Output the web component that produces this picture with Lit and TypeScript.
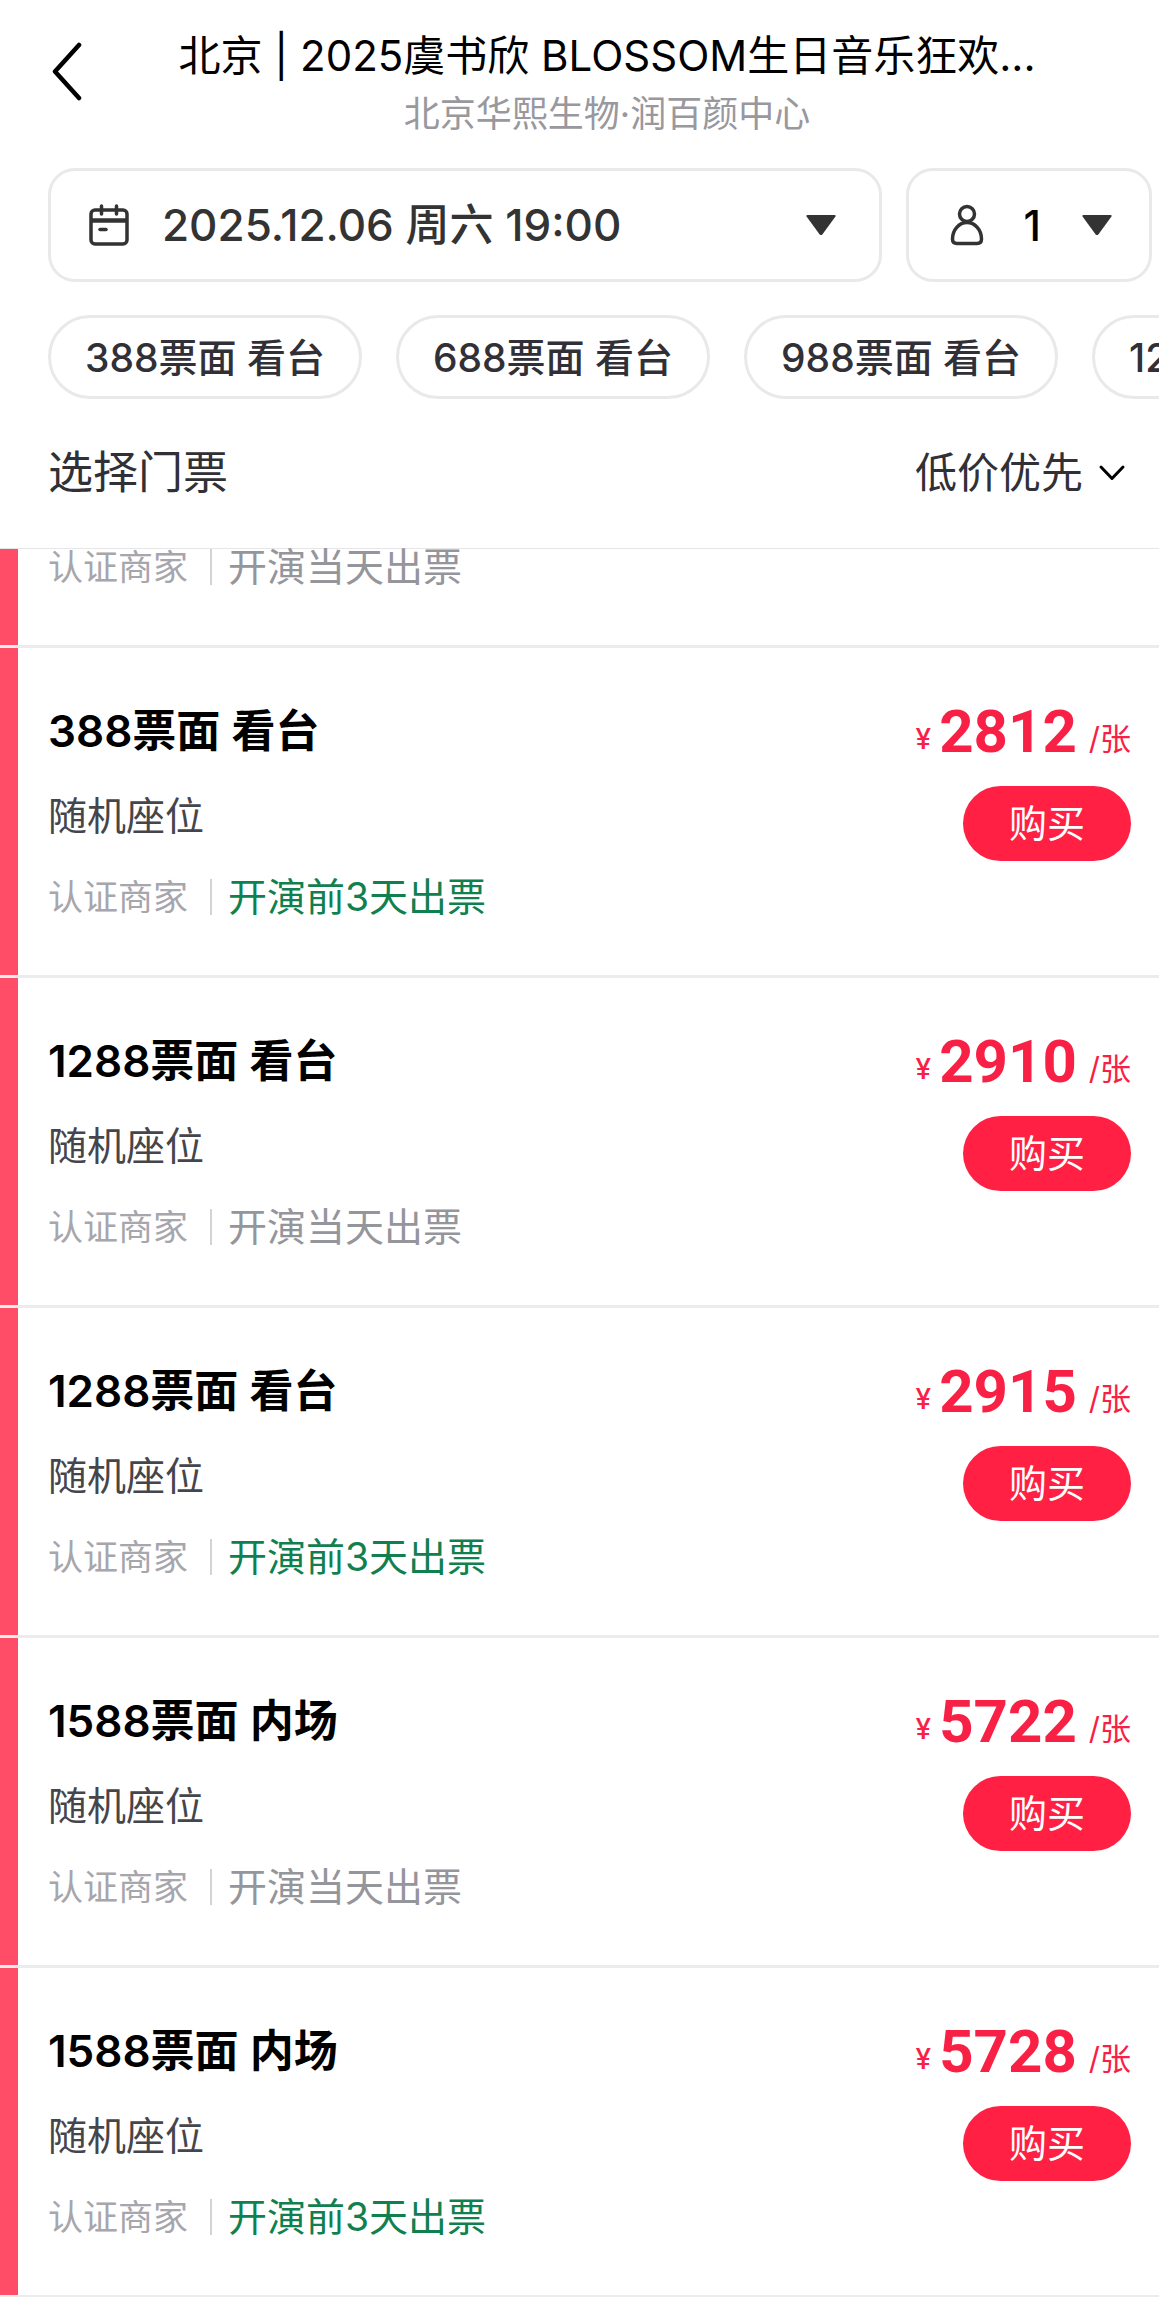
import { LitElement, html, css, svg } from "lit";
import { customElement, property } from "lit/decorators.js";
import { classMap } from "lit/directives/class-map.js";

interface Ticket {
  name: string;
  seat: string;
  seller: string;
  delivery: string;
  early: boolean;
  price: number;
}

const EARLY = "开演前3天出票";
const SAME_DAY = "开演当天出票";

const ticket = (name: string, price: number, early: boolean): Ticket => ({
  name,
  price,
  early,
  seat: "随机座位",
  seller: "认证商家",
  delivery: early ? EARLY : SAME_DAY,
});

const TICKETS: Ticket[] = [
  ticket("388票面 看台", 2812, true),
  ticket("1288票面 看台", 2910, false),
  ticket("1288票面 看台", 2915, true),
  ticket("1588票面 内场", 5722, false),
  ticket("1588票面 内场", 5728, true),
];

const CHIPS = ["388票面 看台", "688票面 看台", "988票面 看台", "1288票面 看台"];

const triangle = html`<svg class="tri" viewBox="0 0 32 22" aria-hidden="true">
  ${svg`<path d="M2.5 1h27q2 0 .8 1.800L17.500 20.200q-1.500 1.800-3 0L1.700 2.800Q.5 1 2.500 1z" fill="#333"/>`}
</svg>`;

const base = css`
  *,
  *::before {
    box-sizing: border-box;
  }
  button,
  select {
    appearance: none;
    margin: 0;
    padding: 0;
    border: 0;
    background: none;
    color: inherit;
    font: inherit;
    cursor: pointer;
  }
  svg {
    display: block;
    flex: none;
  }
`;

@customElement("ticket-meta")
export class TicketMeta extends LitElement {
  @property() seller = "";
  @property() delivery = "";
  @property({ type: Boolean }) early = false;

  static styles = [
    base,
    css`
      :host {
        display: flex;
        align-items: center;
        height: 36px;
        line-height: 36px;
        white-space: nowrap;
      }
      .seller {
        font-size: 35px;
        color: #a6a6ac;
      }
      .rule {
        width: 2px;
        height: 36px;
        margin: 0 16px 0 22px;
        background: #d3d4d8;
      }
      .delivery {
        font-size: 39px;
        color: #95959c;
      }
      .early {
        color: #11804f;
      }
    `,
  ];

  render() {
    return html`<span class="seller">${this.seller}</span>
      <span class="rule"></span>
      <span class=${classMap({ delivery: true, early: this.early })}>${this.delivery}</span>`;
  }
}

@customElement("ticket-row")
export class TicketRow extends LitElement {
  @property({ attribute: false }) ticket!: Ticket;

  static styles = [
    base,
    css`
      :host {
        display: flex;
        justify-content: space-between;
        padding: 53px 28px 60px 30px;
      }
      .name {
        margin: 0 0 31px;
        font-size: 44px;
        line-height: 60px;
        font-weight: 600;
        color: #000;
      }
      .seat {
        margin: 0 0 39px;
        font-size: 39px;
        line-height: 48px;
        color: #45454c;
      }
      .offer {
        display: flex;
        flex-direction: column;
        align-items: flex-end;
        gap: 21px;
      }
      .price {
        display: flex;
        align-items: flex-end;
        height: 64px;
        margin: 0;
        line-height: 52px;
        color: #f82145;
      }
      .yen {
        margin-right: 8px;
        font-size: 28px;
        font-weight: 500;
      }
      .amount {
        font-family: Roboto, "Liberation Sans", sans-serif;
        font-size: 60px;
        line-height: 66px;
        font-weight: 700;
      }
      .unit {
        margin-left: 12px;
        font-size: 31px;
      }
      .buy {
        width: 168px;
        height: 75px;
        border-radius: 38px;
        background: #ff2043;
        color: #fff;
        font-size: 38px;
        line-height: 75px;
      }
    `,
  ];

  render() {
    const t = this.ticket;
    return html`<div class="info">
        <h2 class="name">${t.name}</h2>
        <p class="seat">${t.seat}</p>
        <ticket-meta .seller=${t.seller} .delivery=${t.delivery} .early=${t.early}></ticket-meta>
      </div>
      <div class="offer">
        <p class="price">
          <span class="yen">¥</span><span class="amount">${t.price}</span><span class="unit">/张</span>
        </p>
        <button class="buy" type="button">购买</button>
      </div>`;
  }
}

@customElement("app-root")
export class AppRoot extends LitElement {
  static styles = [
    base,
    css`
      :host {
        display: block;
        min-height: 100vh;
        overflow: hidden;
        background: #fff;
        font-family: Inter, "Noto Sans CJK SC", sans-serif;
        color: #303036;
      }
      .top {
        border-bottom: 1px solid #e6e6e6;
      }
      .bar {
        display: grid;
        grid-template-columns: 127px 1fr 120px;
        padding: 29px 0 33px 48px;
      }
      .back {
        justify-self: start;
        align-self: start;
        padding: 12px 4px;
      }
      .back svg {
        width: 30px;
        height: 60px;
      }
      .heading {
        display: flex;
        flex-direction: column;
        gap: 10px;
        text-align: center;
        white-space: nowrap;
      }
      .title {
        margin: 0;
        font-size: 42px;
        line-height: 54px;
        font-weight: 400;
        color: #000;
      }
      .venue {
        margin: 0;
        font-size: 36px;
        line-height: 42px;
        color: #98989e;
      }
      .filters {
        display: flex;
        gap: 24px;
        padding: 0 7px 33px 48px;
      }
      .field {
        display: flex;
        align-items: center;
        height: 114px;
        border: 3px solid #e9e9e9;
        border-radius: 27px;
        font-size: 44px;
        font-weight: 500;
        color: #333;
      }
      .date {
        flex: 1;
        padding: 0 42px 0 38px;
      }
      .date select {
        flex: 1;
        margin-left: 33px;
        text-align: left;
      }
      .count {
        justify-content: space-between;
        width: 246px;
        padding: 0 36px 0 41px;
        font-size: 42px;
        color: #000;
      }
      .calendar {
        width: 40px;
        height: 42px;
      }
      .person {
        width: 34px;
        height: 42px;
      }
      .tri {
        width: 32px;
        height: 22px;
      }
      .chips {
        display: flex;
        gap: 34px;
        padding: 0 48px 0 48px;
        overflow-x: auto;
        scrollbar-width: none;
      }
      .chip {
        flex: none;
        height: 84px;
        padding: 0 34px 4px;
        border: 3px solid #e9e9e9;
        border-radius: 42px;
        font-size: 39px;
        font-weight: 500;
        white-space: nowrap;
      }
      .sortbar {
        display: flex;
        justify-content: space-between;
        align-items: center;
        padding: 44px 33px 45px 48px;
        line-height: 60px;
      }
      .label {
        margin: 0;
        font-size: 45px;
        line-height: 60px;
        font-weight: 400;
      }
      .sort {
        display: flex;
        align-items: center;
        gap: 14px;
        font-size: 42px;
      }
      .sort svg {
        width: 28px;
        height: 18px;
      }
      .list {
        margin: 0;
        padding: 0;
        list-style: none;
      }
      .item {
        display: flex;
        border-bottom: 3px solid #ececec;
      }
      .item::before {
        content: "";
        flex: none;
        width: 18px;
        background: #ff4d67;
      }
      .item ticket-row {
        flex: 1;
      }
      .partial ticket-meta {
        padding: 0 0 0 30px;
        margin-bottom: 60px;
      }
    `,
  ];

  render() {
    return html`
      <header class="top">
        <div class="bar">
          <button class="back" type="button" aria-label="返回">
            <svg viewBox="0 0 30 60" fill="none" stroke="#000" stroke-width="4.500" stroke-linecap="round" stroke-linejoin="round">
              <path d="M27 4 3 30.500 27 57" />
            </svg>
          </button>
          <div class="heading">
            <h1 class="title">北京 | 2025虞书欣 BLOSSOM生日音乐狂欢...</h1>
            <p class="venue">北京华熙生物·润百颜中心</p>
          </div>
        </div>
        <div class="filters">
          <label class="field date">
            <svg class="calendar" viewBox="0 0 40 42" fill="none" stroke="#333" stroke-width="3.500" stroke-linecap="round">
              <rect x="2" y="6" width="36" height="34" rx="4" />
              <path d="M12.500 2v8M27.500 2v8" />
              <path d="M2 16.500h36" stroke-width="4.500" stroke-linecap="butt" />
              <path d="M11 25.500h6" />
            </svg>
            <select aria-label="场次">
              <option>2025.12.06 周六 19:00</option>
            </select>
            ${triangle}
          </label>
          <label class="field count">
            <svg class="person" viewBox="0 0 34 42" fill="none" stroke="#333" stroke-width="3.500">
              <circle cx="17" cy="10" r="7.500" />
              <path d="M17 18.500C9 18.500 2.500 26 2.500 35q0 4.500 4.500 4.500h20q4.500 0 4.500-4.500C31.500 26 25 18.500 17 18.500z" />
            </svg>
            <select aria-label="张数">
              <option>1</option>
            </select>
            ${triangle}
          </label>
        </div>
        <nav class="chips">
          ${CHIPS.map((c) => html`<button class="chip" type="button">${c}</button>`)}
        </nav>
        <div class="sortbar">
          <h2 class="label">选择门票</h2>
          <label class="sort">
            <select aria-label="排序">
              <option>低价优先</option>
            </select>
            <svg viewBox="0 0 28 18" fill="none" stroke="#000" stroke-width="3" stroke-linecap="round" stroke-linejoin="round">
              <path d="M3 3l11 11.500L25 3" />
            </svg>
          </label>
        </div>
      </header>
      <ul class="list">
        <li class="item partial">
          <ticket-meta seller="认证商家" delivery=${SAME_DAY}></ticket-meta>
        </li>
        ${TICKETS.map((t) => html`<li class="item"><ticket-row .ticket=${t}></ticket-row></li>`)}
      </ul>
    `;
  }
}
